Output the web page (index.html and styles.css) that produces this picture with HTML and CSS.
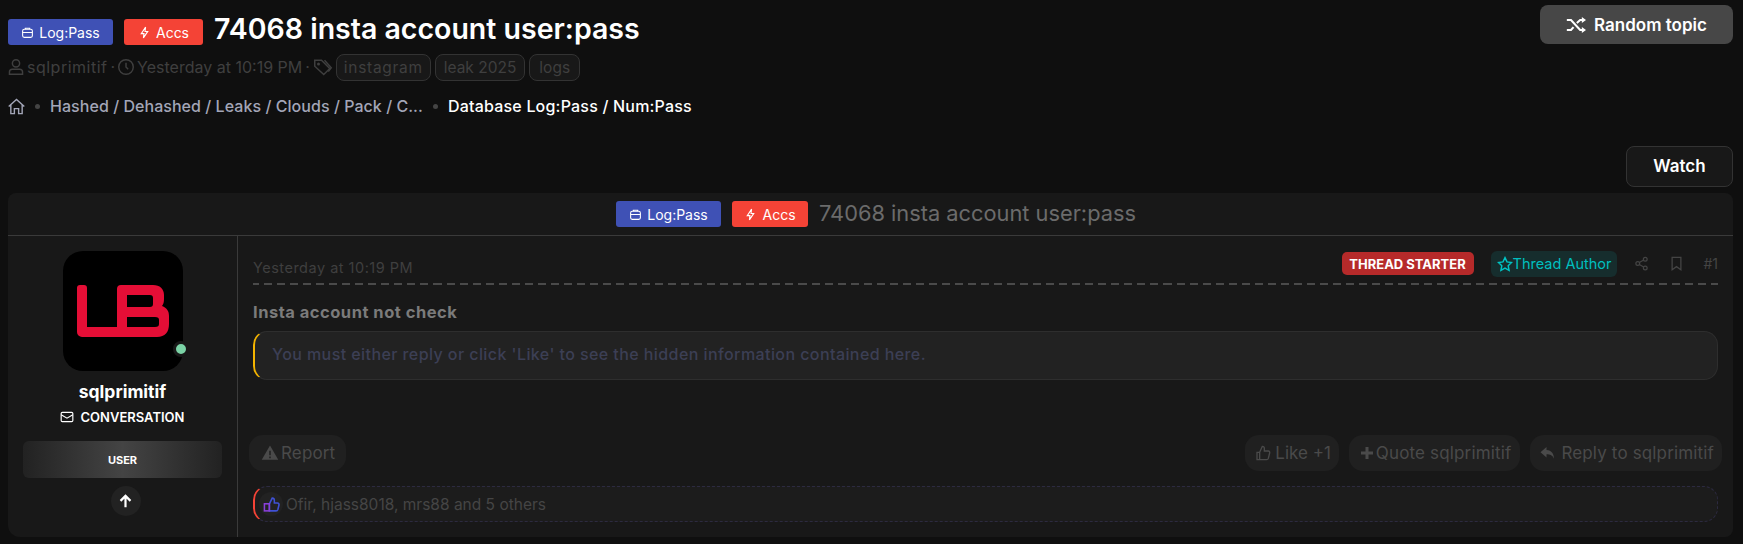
FILE: index.html
```html
<!DOCTYPE html>
<html lang="en">
<head>
  <meta charset="UTF-8">
  <meta name="viewport" content="width=device-width, initial-scale=1.0">
  <title>74068 insta account user:pass</title>
  <link rel="stylesheet" href="styles.css">
</head>
<body>
  <!-- page head -->
  <header class="page-head">
    <div class="page-head-main">
      <h1 class="page-title">
        <span class="label label-blue">
          <svg class="ico-sm" viewBox="0 0 24 24"><rect x="3" y="6" width="18" height="15" rx="3"/><path d="M8 6V4h8v2M3 12h18"/></svg>Log:Pass
        </span>
        <span class="label label-red">
          <svg class="ico-sm" viewBox="0 0 24 24"><path d="M14 2 6 14h5l-1 8 8-12h-5z"/></svg>Accs
        </span>
        <span class="page-title-text">74068 insta account user:pass</span>
      </h1>
      <div class="page-meta">
        <svg class="ico" viewBox="2 1 20 22"><circle cx="12" cy="7" r="5"/><path d="M3 22v-3a4 4 0 0 1 4-4h10a4 4 0 0 1 4 4v3z"/></svg>
        <span class="wide">sqlprimitif</span><span>·</span>
        <svg class="ico" viewBox="1 1 22 22"><circle cx="12" cy="12" r="10"/><path d="M12 6v6l3 3"/></svg>
        <span>Yesterday at 10:19 PM</span><span>·</span>
        <svg class="ico ico-wide" viewBox="0 0 26 24"><path d="M2 3h9l11 11-8 8L2 11z"/><circle cx="7" cy="8" r="1"/><path d="M15 3l9 10-4 5"/></svg>
        <span class="tag tag-long">instagram</span>
        <span class="tag">leak 2025</span>
        <span class="tag tag-short">logs</span>
      </div>
      <nav class="crumbs">
        <svg class="ico-home" viewBox="0 0 24 24"><path d="M1 12 12 2l11 10M4 10v12h5v-7h6v7h5V10"/></svg>
        <span class="crumb-dot"></span>
        <span class="crumb-link">Hashed / Dehashed / Leaks / Clouds / Pack / C...</span>
        <span class="crumb-dot"></span>
        <span class="crumb-current">Database Log:Pass / Num:Pass</span>
      </nav>
    </div>
    <a class="btn-random">
      <svg class="ico-shuffle" viewBox="0 0 24 24"><path d="M1 6h5l11 12h4M1 18h5l3-3.500M13 9.500 17 6h4"/><path class="fill" d="M19 2.500 24 6l-5 3.500zM19 14.500 24 18l-5 3.500z"/></svg>
      Random topic
    </a>
  </header>

  <div class="watch-row">
    <a class="btn-watch">Watch</a>
  </div>

  <!-- thread block -->
  <section class="block">
    <div class="block-head">
      <span class="label label-blue label-small">
        <svg class="ico-sm" viewBox="0 0 24 24"><rect x="3" y="6" width="18" height="15" rx="3"/><path d="M8 6V4h8v2M3 12h18"/></svg>Log:Pass
      </span>
      <span class="label label-red label-small">
        <svg class="ico-sm" viewBox="0 0 24 24"><path d="M14 2 6 14h5l-1 8 8-12h-5z"/></svg>Accs
      </span>
      <span class="block-title">74068 insta account user:pass</span>
    </div>

    <article class="post">
      <aside class="user-cell">
        <div class="avatar">
          <svg class="avatar-logo" viewBox="0 0 120 120">
            <path d="M14 37a3 3 0 0 1 3-3h4a3 3 0 0 1 3 3v39h30v10H19a5 5 0 0 1-5-5z"/>
            <path fill-rule="evenodd" d="M54 38a4 4 0 0 1 4-4h32c7 0 11 4 11 10v4c0 3-.500 5-2 7 5 2 7 5 7 10v8c0 8-4 13-12 13H54zM64 44v12h23c2 0 3-1 3-3v-6c0-2-1-3-3-3zM64 66v10h28c3 0 4-1 4-3v-4c0-2-1-3-4-3z"/>
          </svg>
          <span class="online"></span>
        </div>
        <div class="user-name">sqlprimitif</div>
        <div class="user-conv">
          <svg class="ico-mail" viewBox="0 0 24 24"><rect x="2" y="4" width="20" height="16" rx="2"/><path d="m2 8 10 6 10-6"/></svg>
          CONVERSATION
        </div>
        <div class="user-banner">USER</div>
        <div class="up-btn">
          <svg viewBox="0 0 24 24"><path d="M12 21V4M4 11l8-8 8 8"/></svg>
        </div>
      </aside>

      <div class="post-main">
        <div class="post-attr">
          <span class="post-time">Yesterday at 10:19 PM</span>
          <div class="post-attr-right">
            <span class="badge-starter">THREAD STARTER</span>
            <span class="badge-author">
              <svg viewBox="0 0 24 24"><path d="m12 2.500 3 6.300 6.800.9-5 4.800 1.300 6.900-6.100-3.400-6.100 3.400 1.300-6.900-5-4.800 6.800-.9z"/></svg>Thread Author
            </span>
            <svg class="ico-attr" viewBox="0 0 24 24"><circle cx="18" cy="5" r="3"/><circle cx="6" cy="12" r="3"/><circle cx="18" cy="19" r="3"/><path d="m8.600 10.500 6.800-4M8.600 13.500l6.800 4"/></svg>
            <svg class="ico-attr" viewBox="0 0 24 24"><path d="M5 2h14v20l-7-5-7 5z"/></svg>
            <span class="post-num">#1</span>
          </div>
        </div>

        <div class="post-text">Insta account not check</div>
        <div class="hidden-box">You must either reply or click 'Like' to see the hidden information contained here.</div>

        <div class="post-actions">
          <a class="act act-report">
            <svg class="fill-ico" viewBox="0 0 24 24"><path d="M12 2 23 21H1zM11 9v6h2V9zm0 7.500V19h2v-2.500z" fill-rule="evenodd"/></svg>Report
          </a>
          <div class="act-group">
            <a class="act act-like">
              <svg class="line-ico" viewBox="0 0 24 24"><path d="M7 11l4-9c2 0 3 1.500 3 3v4h6c1.500 0 2.500 1.500 2 3l-2 8c-.3 1-1 2-2.500 2H7zM7 11H3v11h4"/></svg>Like +1
            </a>
            <a class="act act-tight">
              <svg class="line-ico line-bold" viewBox="0 0 24 24"><path d="M12 4v16M4 12h16"/></svg>Quote sqlprimitif
            </a>
            <a class="act act-reply">
              <svg class="fill-ico" viewBox="0 0 24 24"><path d="M10 4 2 11l8 7v-4.500c5 0 8 1.500 10 6 0-6-3-11-10-11.500z"/></svg>Reply to sqlprimitif
            </a>
          </div>
        </div>

        <div class="likes-bar">
          <span class="likes-ico">
            <svg viewBox="0 0 24 24"><path class="thumb" d="M9 11l4-8c2 0 3 1.500 3 3v4h4.500c1.500 0 2.500 1.500 2 3l-1.500 6c-.3 1-1 2-2.500 2H9z"/><rect class="thumb-base" x="2" y="11" width="7" height="10"/></svg>
          </span>
          <span class="likes-text">Ofir, hjass8018, mrs88 and 5 others</span>
        </div>
      </div>
    </article>
  </section>
</body>
</html>
```

FILE: styles.css
```css
/* base */
* {
  box-sizing: border-box;
}
html, body {
  height: 100%;
}
body {
  margin: 0;
  padding: 5px 10px 7px 8px;
  background-color: #0f0f0f;
  color: #fff;
  font-family: 'Inter', 'Liberation Sans', sans-serif;
  font-size: 15px;
  overflow: hidden;
}
svg {
  flex: none;
  display: block;
}
.wide {
  letter-spacing: .5px;
}

/* page head */
.page-head {
  display: flex;
  justify-content: space-between;
  align-items: flex-start;
  height: 124px;
}
.page-title {
  display: flex;
  align-items: center;
  margin: 14px 0 0;
  font-weight: 600;
}
.label {
  display: inline-flex;
  align-items: center;
  justify-content: center;
  gap: 5px;
  width: 105px;
  height: 26px;
  margin-right: 11px;
  border-radius: 3px;
  font-size: 14px;
  font-weight: 400;
  color: #fff;
}
.label-blue {
  background-color: #3f51b5;
}
.label-red {
  background-color: #f44336;
  width: 79px;
}
.page-title-text {
  font-size: 28.500px;
  line-height: 30px;
  margin-top: -7px;
}
.ico-sm {
  width: 13px;
  height: 13px;
  fill: none;
  stroke: #fff;
  stroke-width: 2;
}
.page-meta {
  display: flex;
  align-items: center;
  gap: 3px;
  height: 28px;
  margin-top: 8px;
  color: #3f3f3f;
  font-size: 16px;
}
.ico {
  width: 16px;
  height: 16px;
  fill: none;
  stroke: #3f3f3f;
  stroke-width: 2;
}
.ico-wide {
  width: 20px;
  height: 18px;
}
.tag {
  display: inline-flex;
  align-items: center;
  height: 27px;
  padding: 0 8px;
  margin-right: 1px;
  border: 1px solid #333;
  border-radius: 8px;
  background-color: #181818;
  font-size: 15.500px;
}
.tag-long {
  padding: 0 7px;
  letter-spacing: .7px;
}
.tag-short {
  padding: 0 9px;
}
.crumbs {
  display: flex;
  align-items: center;
  height: 24px;
  margin-top: 13px;
  font-size: 16px;
  font-weight: 500;
  color: #a3a6b8;
}
.ico-home {
  width: 17px;
  height: 17px;
  fill: none;
  stroke: #a3a6b8;
  stroke-width: 2;
}
.crumb-dot {
  width: 5px;
  height: 5px;
  margin: 0 10px;
  border-radius: 50%;
  background-color: #444;
}
.crumb-link {
  letter-spacing: .05px;
}
.crumb-current {
  color: #fff;
  letter-spacing: .2px;
}
.btn-random {
  display: flex;
  align-items: center;
  justify-content: center;
  gap: 8px;
  width: 193px;
  height: 39px;
  background-color: #474747;
  border-radius: 8px;
  font-size: 17px;
  font-weight: 600;
}
.ico-shuffle {
  width: 20px;
  height: 20px;
  fill: none;
  stroke: #fff;
  stroke-width: 2.500;
}
.ico-shuffle .fill {
  fill: #fff;
  stroke: none;
}

/* watch */
.watch-row {
  display: flex;
  justify-content: flex-end;
  margin-top: 17px;
}
.btn-watch {
  display: flex;
  align-items: center;
  justify-content: center;
  width: 107px;
  height: 41px;
  padding-bottom: 2px;
  background-color: #181818;
  border: 1px solid #333;
  border-radius: 8px;
  font-size: 17px;
  font-weight: 600;
}

/* thread block */
.block {
  margin-top: 6px;
  height: 344px;
  background-color: #181818;
  border-radius: 8px 8px 8px 12px;
  overflow: hidden;
}
.block-head {
  display: flex;
  align-items: center;
  justify-content: center;
  height: 43px;
  padding-left: 11px;
  border-bottom: 1px solid #3a3a3a;
}
.label-small {
  width: 105px;
  margin-right: 11px;
}
.label-small.label-red {
  width: 76px;
}
.block-title {
  margin-top: -3px;
  font-size: 21.800px;
  color: #6b6b6b;
}
.post {
  display: flex;
  height: 301px;
}
.user-cell {
  display: flex;
  flex-direction: column;
  align-items: center;
  width: 230px;
  padding: 15px 15px 0;
  border-right: 1px solid #3a3a3a;
}
.avatar {
  position: relative;
  width: 120px;
  height: 120px;
  background-color: #000;
  border-radius: 20px;
}
.avatar-logo {
  width: 120px;
  height: 120px;
  fill: #e50e36;
}
.online {
  position: absolute;
  right: -6px;
  bottom: 14px;
  width: 16px;
  height: 16px;
  border: 3px solid #181818;
  border-radius: 50%;
  background-color: #7bd3a6;
}
.user-name {
  margin-top: 11px;
  font-size: 17.500px;
  font-weight: 700;
  line-height: 20px;
}
.user-conv {
  display: flex;
  align-items: center;
  gap: 7px;
  margin-top: 6px;
  height: 18px;
  font-size: 13px;
  font-weight: 600;
  margin-left: -1px;
}
.ico-mail {
  width: 14px;
  height: 14px;
  fill: none;
  stroke: #fff;
  stroke-width: 2;
}
.user-banner {
  display: flex;
  align-items: center;
  justify-content: center;
  width: 199px;
  height: 37px;
  margin-top: 15px;
  border-radius: 6px;
  background: linear-gradient(90deg, #222 0%, #444 50%, #222 100%);
  font-size: 11px;
  font-weight: 700;
}
.up-btn {
  display: flex;
  align-items: center;
  justify-content: center;
  width: 30px;
  height: 30px;
  margin-top: 8px;
  margin-left: 6px;
  border-radius: 50%;
  background-color: #222;
}
.up-btn svg {
  width: 15px;
  height: 15px;
  fill: none;
  stroke: #fff;
  stroke-width: 3.500;
}
.post-main {
  flex: 1;
  padding: 0 15px;
  min-width: 0;
}
.post-attr {
  display: flex;
  justify-content: space-between;
  align-items: center;
  height: 49px;
  padding-top: 8px;
  border-bottom: 2px dashed #4a4a4a;
  border-image: repeating-linear-gradient(90deg, #4a4a4a 0 8px, transparent 8px 13px) 2;
}
.post-time {
  margin-top: 7px;
  font-size: 14.500px;
  letter-spacing: .5px;
  color: #3f3f3f;
}
.post-attr-right {
  display: flex;
  align-items: center;
}
.badge-starter {
  display: flex;
  align-items: center;
  justify-content: center;
  width: 132px;
  height: 23px;
  margin-right: 17px;
  border-radius: 5px;
  background-color: #b62a2a;
  font-size: 13px;
  font-weight: 700;
}
.badge-author {
  display: flex;
  align-items: center;
  height: 26px;
  padding: 0 6px;
  margin-right: 17px;
  border-radius: 6px;
  background-color: #162d2d;
  color: #00bfbf;
  font-size: 14.500px;
}
.badge-author svg {
  width: 16px;
  height: 16px;
  fill: none;
  stroke: #00c4c4;
  stroke-width: 2.200;
}
.ico-attr {
  width: 15px;
  height: 15px;
  margin-right: 20px;
  fill: none;
  stroke: #444;
  stroke-width: 2;
}
.post-num {
  color: #444;
  font-size: 14px;
  margin-left: -1px;
}
.post-text {
  margin-top: 16px;
  line-height: 22px;
  font-size: 16.500px;
  letter-spacing: .5px;
  font-weight: 700;
  color: #7b7b7b;
}
.hidden-box {
  display: flex;
  align-items: center;
  height: 49px;
  margin-top: 8px;
  padding: 0 0 3px 17px;
  border: 1px solid #2e2e2e;
  border-left: 2px solid #f4b400;
  border-radius: 14px;
  background-color: #222;
  color: #3c3f55;
  font-size: 16px;
  letter-spacing: .42px;
  font-weight: 500;
}
.post-actions {
  display: flex;
  justify-content: space-between;
  margin: 55px -4px 0;
}
.act-group {
  display: flex;
  gap: 10px;
}
.act {
  display: flex;
  align-items: center;
  gap: 4px;
  height: 36px;
  padding: 0 10px;
  border-radius: 14px;
  background-color: #202020;
  color: #4a4a4a;
  font-size: 17px;
  letter-spacing: .15px;
}
.act-report {
  gap: 2px;
  padding: 0 11px 0 12px;
}
.act-like {
  padding: 0 8px 0 10px;
  letter-spacing: 0;
}
.act-reply {
  padding: 0 8px 0 9px;
}
.act-tight {
  gap: 0;
  padding: 0 9px;
}
.fill-ico {
  width: 18px;
  height: 18px;
  fill: #4a4a4a;
}
.line-ico {
  width: 16px;
  height: 16px;
  fill: none;
  stroke: #4a4a4a;
  stroke-width: 2;
}
.line-bold {
  width: 18px;
  height: 18px;
  stroke-width: 4;
}
.likes-bar {
  display: flex;
  align-items: center;
  height: 36px;
  margin-top: 15px;
  padding-left: 4px;
  border: 1px dashed #2c2a40;
  border-left: 2px solid #f44336;
  border-radius: 14px;
  background-color: #1c1c1c;
  color: #454545;
  font-size: 15.500px;
}
.likes-ico {
  display: flex;
  align-items: center;
  justify-content: center;
  width: 24px;
  height: 24px;
  margin-right: 3px;
  border-radius: 50%;
  background-color: #222;
}
.likes-ico svg {
  width: 17px;
  height: 17px;
  fill: none;
  stroke-width: 2.200;
}
.thumb {
  stroke: #3f51d5;
}
.thumb-base {
  stroke: #8a3fd9;
}
```
